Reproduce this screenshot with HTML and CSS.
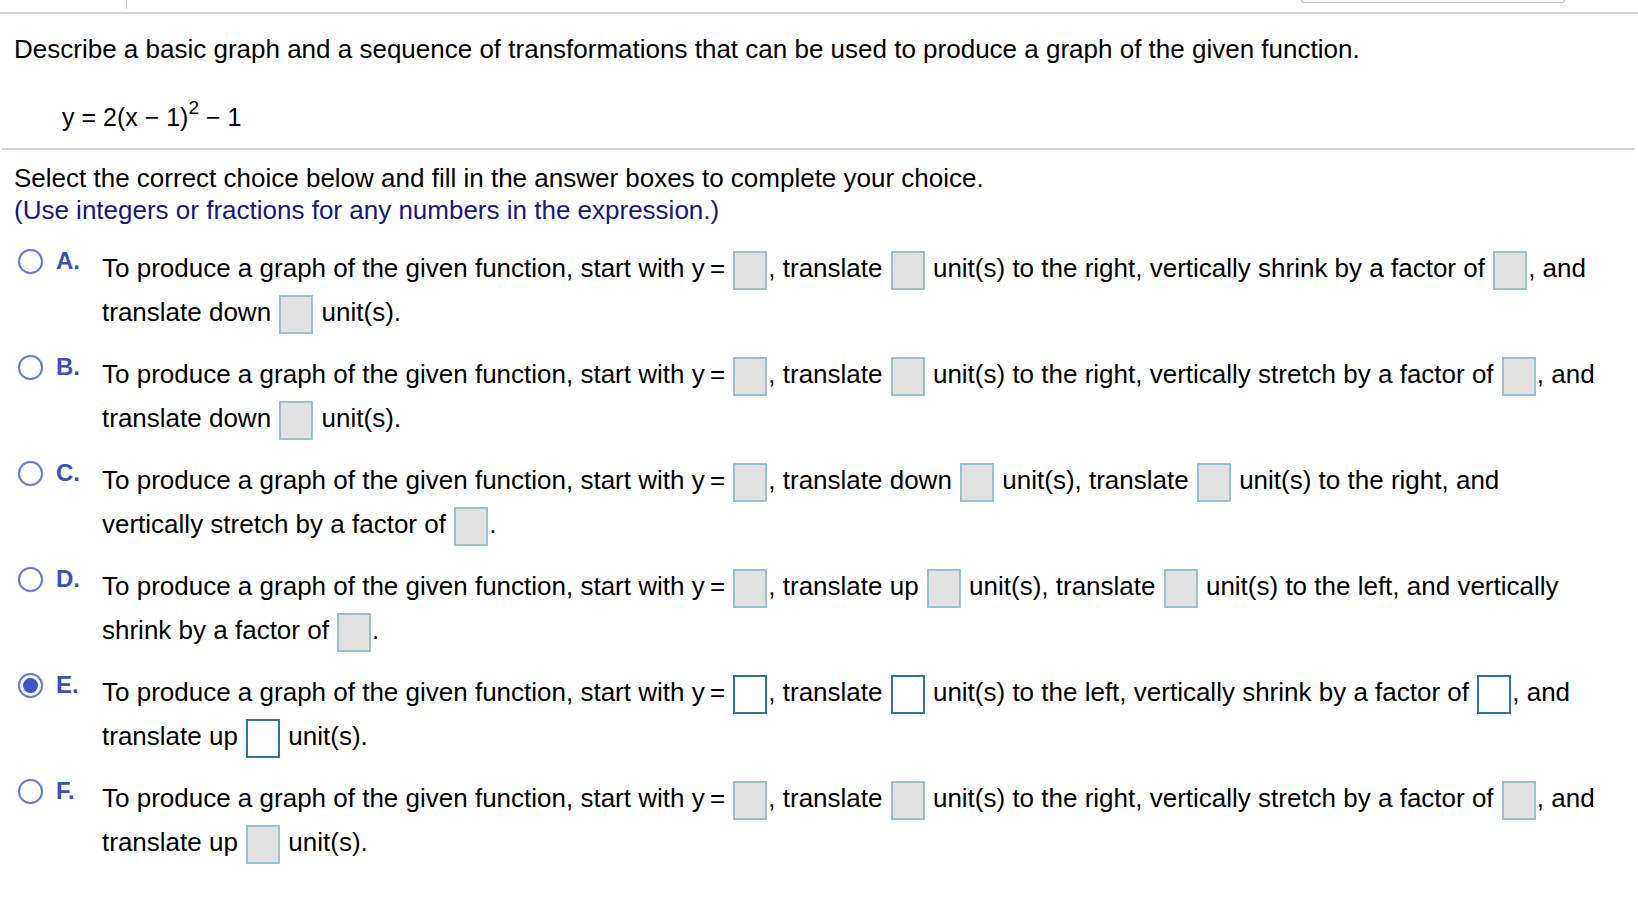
FILE: index.html
```html
<!doctype html>

<html>

<head>
  <title>Transformations of a basic graph</title>
  <link rel="stylesheet" href="styles.css">
</head>

<body>

  <div class='toolbar'>
    <div class='tool-left'></div>
    <div class='tool-box'></div>
  </div>

  <div class='question'>
    <p class='prompt'>Describe a basic graph and a sequence of transformations that can be used to produce a graph of the given function.</p>
    <p class='equation'>y = 2(x − 1)<sup>2</sup> − 1</p>
  </div>

  <div class='answer'>
    <p class='instr'>Select the correct choice below and fill in the answer boxes to complete your choice.</p>
    <p class='hint'>(Use integers or fractions for any numbers in the expression.)</p>

    <div class='choice'>
      <span class='radio'></span>
      <span class='letter'>A.</span>
      <div class='choice-text'>To produce a graph of the given function, start with y&#8201;= <span class='box'></span>, translate <span class='box'></span> unit(s) to the right, vertically shrink by a factor of <span class='box'></span>, and translate down <span class='box'></span> unit(s).</div>
    </div>

    <div class='choice'>
      <span class='radio'></span>
      <span class='letter'>B.</span>
      <div class='choice-text'>To produce a graph of the given function, start with y&#8201;= <span class='box'></span>, translate <span class='box'></span> unit(s) to the right, vertically stretch by a factor of <span class='box'></span>, and translate down <span class='box'></span> unit(s).</div>
    </div>

    <div class='choice'>
      <span class='radio'></span>
      <span class='letter'>C.</span>
      <div class='choice-text'>To produce a graph of the given function, start with y&#8201;= <span class='box'></span>, translate down <span class='box'></span> unit(s), translate <span class='box'></span> unit(s) to the right, and vertically stretch by a factor of <span class='box'></span>.</div>
    </div>

    <div class='choice'>
      <span class='radio'></span>
      <span class='letter'>D.</span>
      <div class='choice-text'>To produce a graph of the given function, start with y&#8201;= <span class='box'></span>, translate up <span class='box'></span> unit(s), translate <span class='box'></span> unit(s) to the left, and vertically shrink by a factor of <span class='box'></span>.</div>
    </div>

    <div class='choice selected'>
      <span class='radio'></span>
      <span class='letter'>E.</span>
      <div class='choice-text'>To produce a graph of the given function, start with y&#8201;= <span class='box'></span>, translate <span class='box'></span> unit(s) to the left, vertically shrink by a factor of <span class='box'></span>, and translate up <span class='box'></span> unit(s).</div>
    </div>

    <div class='choice'>
      <span class='radio'></span>
      <span class='letter'>F.</span>
      <div class='choice-text'>To produce a graph of the given function, start with y&#8201;= <span class='box'></span>, translate <span class='box'></span> unit(s) to the right, vertically stretch by a factor of <span class='box'></span>, and translate up <span class='box'></span> unit(s).</div>
    </div>
  </div>

</body>
</html>
```

FILE: styles.css
```css
    body{
      margin: 0;
      font-family: "Liberation Sans", Arial, sans-serif;
      font-size: 26px;
      color: #000;
      background-color: #fff;
    }
    p{
      margin: 0;
    }
/* top strip */
    .toolbar{
      display: flex;
      height: 12px;
      border-bottom: 2px solid #d0d3de;
    }
    .tool-left{
      width: 126px;
      height: 9px;
      border-right: 1px solid #cfcfcf;
    }
    .tool-box{
      width: 262px;
      height: 2px;
      margin-left: auto;
      margin-right: 73px;
      border: 1px solid #c6c6c6;
      border-top: 0;
      border-radius: 0 0 5px 5px;
    }
/* question */
    .question{
      margin: 0 3px 0 2px;
      padding: 19px 0 15px 12px;
      border-bottom: 2px solid #cdd1dc;
    }
    .prompt{
      line-height: 32px;
    }
    .equation{
      margin-top: 36px;
      padding-left: 48px;
      font-size: 25px;
      line-height: 32px;
    }
    .equation sup{
      font-size: 19px;
      line-height: 0;
      vertical-align: 12px;
    }
/* answer area */
    .answer{
      padding: 12px 0 0 14px;
    }
    .instr, .hint{
      line-height: 32px;
    }
    .hint{
      color: #16168a;
    }
    .choice{
      display: flex;
      align-items: flex-start;
      margin-top: 18px;
      padding-left: 4px;
    }
    .hint + .choice{
      margin-top: 20px;
    }
    .radio{
      flex: none;
      width: 21px;
      height: 21px;
      margin-top: 3px;
      border: 2px solid #6679d9;
      border-radius: 50%;
      box-shadow: 0 0 1px #8796e2;
      position: relative;
    }
    .selected .radio::after{
      content: '';
      position: absolute;
      left: 3px;
      top: 3px;
      width: 15px;
      height: 15px;
      border-radius: 50%;
      background-color: #3d55cf;
    }
    .letter{
      flex: none;
      width: 46px;
      margin-left: 13px;
      font-size: 24px;
      font-weight: bold;
      line-height: 30px;
      color: #3a4ec0;
    }
    .choice-text{
      width: 1498px;
      line-height: 44px;
    }
    .box{
      display: inline-block;
      width: 30px;
      height: 35px;
      margin: 0 1px;
      vertical-align: middle;
      border: 2px solid #9ebfd0;
      background-color: #e1e1e1;
    }
    .selected .box{
      border-color: #2e7599;
      background-color: #fff;
    }
```
